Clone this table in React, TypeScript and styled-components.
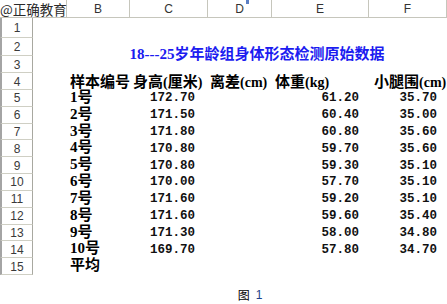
import React from 'react';
import styled, { createGlobalStyle } from 'styled-components';

const GlobalStyle = createGlobalStyle`
  html, body {
    margin: 0;
    padding: 0;
    background: #ffffff;
  }
  body {
    font-family: "Liberation Serif", "Noto Sans CJK SC", serif;
    color: #000;
  }
`;

interface Row {
  no: number;
  height: number;
  weight: string;
  calf: string;
}

const rows: Row[] = [
  { no: 1, height: 172.7, weight: '61.20', calf: '35.70' },
  { no: 2, height: 171.5, weight: '60.40', calf: '35.00' },
  { no: 3, height: 171.8, weight: '60.80', calf: '35.60' },
  { no: 4, height: 170.8, weight: '59.70', calf: '35.60' },
  { no: 5, height: 170.8, weight: '59.30', calf: '35.10' },
  { no: 6, height: 170.0, weight: '57.70', calf: '35.10' },
  { no: 7, height: 171.6, weight: '59.20', calf: '35.10' },
  { no: 8, height: 171.6, weight: '59.60', calf: '35.40' },
  { no: 9, height: 171.3, weight: '58.00', calf: '34.80' },
  { no: 10, height: 169.7, weight: '57.80', calf: '34.70' },
];

const columns = ['B', 'C', 'D', 'E', 'F'];

function App() {
  return (
    <Page>
      <GlobalStyle />
      <Sheet>
        <Corner>@正确教育</Corner>
        {columns.map((c, i) => (
          <ColHead key={c} $col={i + 3} $marked={c === 'D'}>{c}</ColHead>
        ))}

        {Array.from({ length: 15 }, (_, i) => (
          <RowHead key={i} $row={i + 2}>{i + 1}</RowHead>
        ))}

        <Title>18---25岁年龄组身体形态检测原始数据</Title>

        <HeadCell $row={5} $col={3}>样本编号</HeadCell>
        <HeadCell $row={5} $col={4}>身高<Unit>(</Unit>厘米<Unit>)</Unit></HeadCell>
        <HeadCell $row={5} $col={5} $pad={2}>离差<Unit>(cm)</Unit></HeadCell>
        <HeadCell $row={5} $col={6}>体重<Unit>(kg)</Unit></HeadCell>
        <HeadCell $row={5} $col={7} $pad={5}>小腿围<Unit>(cm)</Unit></HeadCell>

        {rows.map((r, i) => (
          <React.Fragment key={r.no}>
            <Label $row={i + 6} $col={3}>{r.no}号</Label>
            <Num $row={i + 6} $col={4} $pad={13}>{r.height.toFixed(2)}</Num>
            <Num $row={i + 6} $col={6} $pad={10}>{r.weight}</Num>
            <Num $row={i + 6} $col={7} $pad={10}>{r.calf}</Num>
          </React.Fragment>
        ))}
        <Label $row={16} $col={3}>平均</Label>
      </Sheet>
      <Caption>
        <CaptionHan>图</CaptionHan>
        <CaptionNum>1</CaptionNum>
      </Caption>
    </Page>
  );
}

const Page = styled.div`
  width: 447px;
  height: 304px;
  overflow: hidden;
  background: #fff;
`;

const Sheet = styled.div`
  display: grid;
  grid-template-columns: 33px 34px 63px 78px 64px 97px 78px;
  grid-template-rows: 18px 20px 18px 17px 17px repeat(11, 16.82px);
`;

const Corner = styled.div`
  grid-row: 1;
  grid-column: 1 / 3;
  display: flex;
  align-items: center;
  border-right: 1px solid #c6c6bc;
  border-bottom: 1px solid #c6c6bc;
  font-family: "Noto Sans CJK SC", sans-serif;
  font-size: 13.5px;
  color: #2a2a2a;
  white-space: nowrap;
`;

const ColHead = styled.div<{ $col: number; $marked?: boolean }>`
  position: relative;
  grid-row: 1;
  grid-column: ${p => p.$col};
  display: flex;
  align-items: center;
  justify-content: center;
  border-right: 1px solid #c6c6bc;
  border-bottom: 1px solid #c6c6bc;
  font-family: "Liberation Sans", sans-serif;
  font-size: 12px;
  color: #333;

  &::after {
    content: '';
    display: ${p => (p.$marked ? 'block' : 'none')};
    position: absolute;
    top: 0;
    left: 38px;
    width: 3px;
    height: 4px;
    background: #5b7fc4;
  }
`;

const RowHead = styled.div<{ $row: number }>`
  grid-row: ${p => p.$row};
  grid-column: 1;
  display: flex;
  align-items: center;
  justify-content: center;
  box-sizing: border-box;
  border-left: 2px solid #a4a4a4;
  border-right: 1px solid #a8a8a0;
  border-bottom: 1px solid #cfcfc4;
  font-family: "Liberation Sans", sans-serif;
  font-size: 12px;
  color: #3a3a3a;
  padding-top: 1px;
`;

const Title = styled.div`
  grid-row: 3 / 5;
  grid-column: 3 / 8;
  display: flex;
  align-items: center;
  justify-content: center;
  padding-bottom: 6px;
  font-family: "Liberation Serif", "Noto Sans CJK SC", serif;
  font-weight: 700;
  font-size: 15px;
  color: #1c1cf0;
  white-space: nowrap;
`;

const HeadCell = styled.div<{ $row: number; $col: number; $pad?: number }>`
  grid-row: ${p => p.$row};
  grid-column: ${p => p.$col};
  padding-left: ${p => p.$pad ?? 3}px;
  line-height: 19px;
  white-space: nowrap;
  font-family: "Liberation Serif", "Noto Sans CJK SC", serif;
  font-weight: 700;
  font-size: 15px;
`;

const Unit = styled.span`
  font-family: "Liberation Serif", serif;
  font-size: 14px;
  font-weight: 700;
`;

const Label = styled.div<{ $row: number; $col: number }>`
  grid-row: ${p => p.$row};
  grid-column: ${p => p.$col};
  padding-left: 3px;
  line-height: 14px;
  white-space: nowrap;
  font-family: "Liberation Serif", "Noto Sans CJK SC", serif;
  font-weight: 700;
  font-size: 15px;
`;

const Num = styled.div<{ $row: number; $col: number; $pad?: number }>`
  grid-row: ${p => p.$row};
  grid-column: ${p => p.$col};
  display: flex;
  align-items: center;
  justify-content: flex-end;
  padding-right: ${p => p.$pad ?? 10}px;
  white-space: nowrap;
  font-family: "Liberation Mono", monospace;
  font-weight: 700;
  font-size: 12.5px;
  color: #111;
`;

const Caption = styled.div`
  display: flex;
  justify-content: center;
  align-items: center;
  gap: 6px;
  margin-top: 12px;
  padding-left: 53px;
  height: 16px;
`;

const CaptionHan = styled.span`
  font-family: "Noto Sans CJK SC", sans-serif;
  font-size: 12px;
`;

const CaptionNum = styled.span`
  font-family: "Liberation Sans", sans-serif;
  font-size: 12px;
  color: #1d3f8a;
`;

export default App;
